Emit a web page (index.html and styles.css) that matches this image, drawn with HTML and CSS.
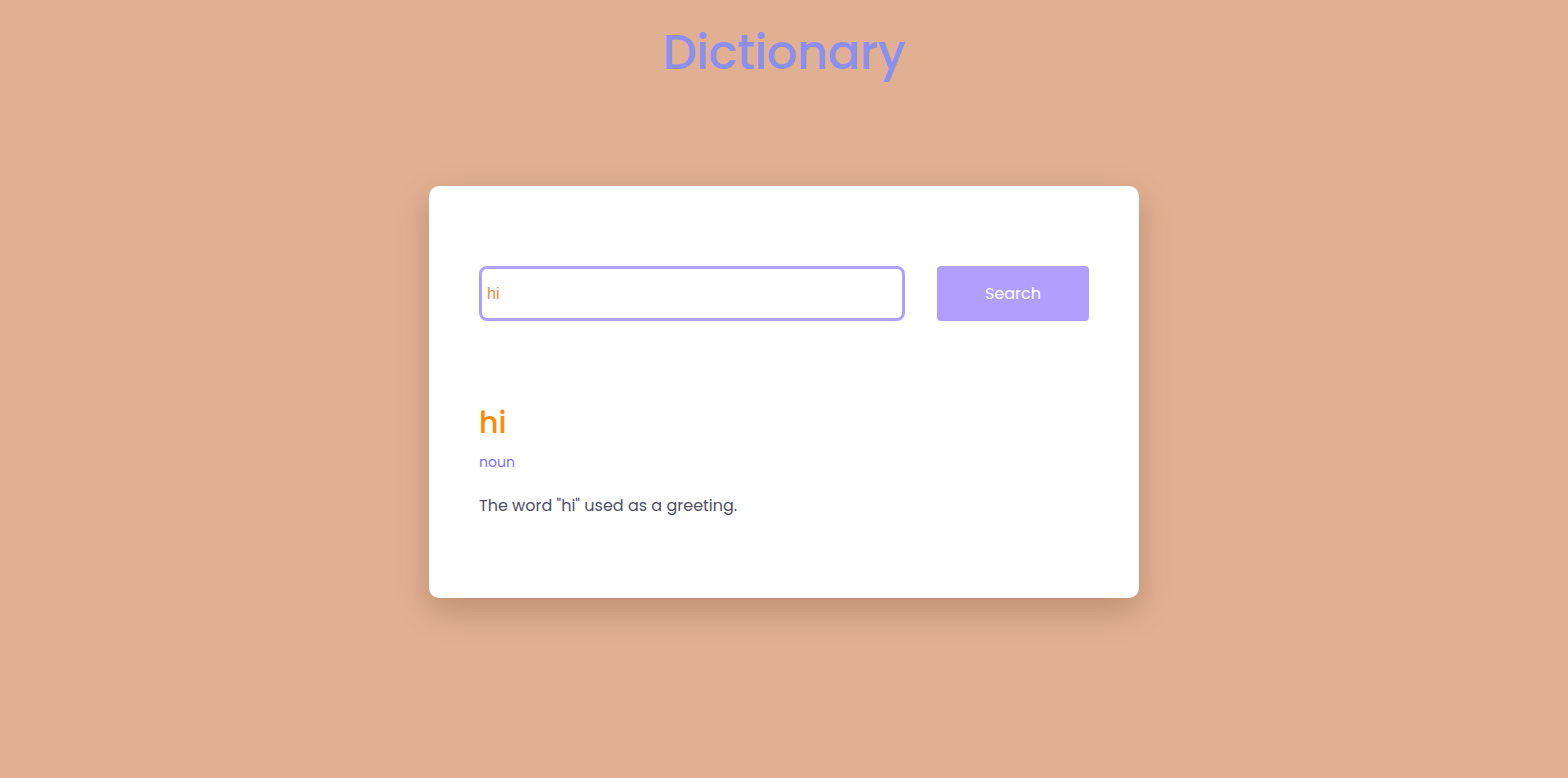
FILE: index.html
```html
<!DOCTYPE html>
<html lang="en">
<head>
<meta charset="utf-8">
<title>Dictionary</title>
<link rel="stylesheet" href="styles.css">
</head>
<body>
<div class="page">
  <h1 class="title">Dictionary</h1>
  <div class="card">
    <form class="search">
      <input class="search-input" type="text" value="hi">
      <button class="search-btn" type="button">Search</button>
    </form>
    <div class="result">
      <h2 class="word">hi</h2>
      <p class="pos">noun</p>
      <p class="definition">The word "hi" used as a greeting.</p>
    </div>
  </div>
</div>
</body>
</html>
```
FILE: styles.css
```css
* { box-sizing: border-box; }
html, body { margin: 0; padding: 0; }
body {
  background: #e1b092;
  font-family: "Poppins", "Open Sans", "Noto Sans", sans-serif;
  min-height: 778px;
}
.page {
  display: flex;
  flex-direction: column;
  align-items: center;
}
.title {
  margin: 22px 0 0;
  height: 164px;
  font-size: 48px;
  font-weight: 500;
  line-height: 62px;
  color: #8a8ff0;
  letter-spacing: -0.4px;
}
.card {
  width: 710px;
  background: #fff;
  border-radius: 10px;
  padding: 80px 50px 80px;
  box-shadow: 0 12px 30px rgba(120, 80, 60, 0.35);
}
.search {
  display: flex;
  gap: 32px;
  margin: 0;
}
.search-input {
  flex: 1;
  height: 55px;
  border: 3px solid #b0a0ff;
  border-radius: 8px;
  padding: 0 5px;
  font-family: "Liberation Sans", Arial, sans-serif;
  font-size: 16px;
  color: #f0883a;
  outline: none;
}
.search-btn {
  width: 152px;
  height: 55px;
  border: none;
  border-radius: 4px;
  background: #b19ffe;
  color: #fff;
  font-family: inherit;
  font-size: 16px;
}
.result {
  padding-top: 83px;
}
.word {
  margin: 0;
  font-size: 30px;
  font-weight: 500;
  line-height: 38px;
  color: #ff8a00;
}
.pos {
  margin: 10px 0 0;
  font-size: 14px;
  line-height: 20px;
  color: #7d70f8;
}
.definition {
  margin: 22px 0 0;
  font-size: 16px;
  line-height: 24px;
  color: #4e4f66;
}
```
